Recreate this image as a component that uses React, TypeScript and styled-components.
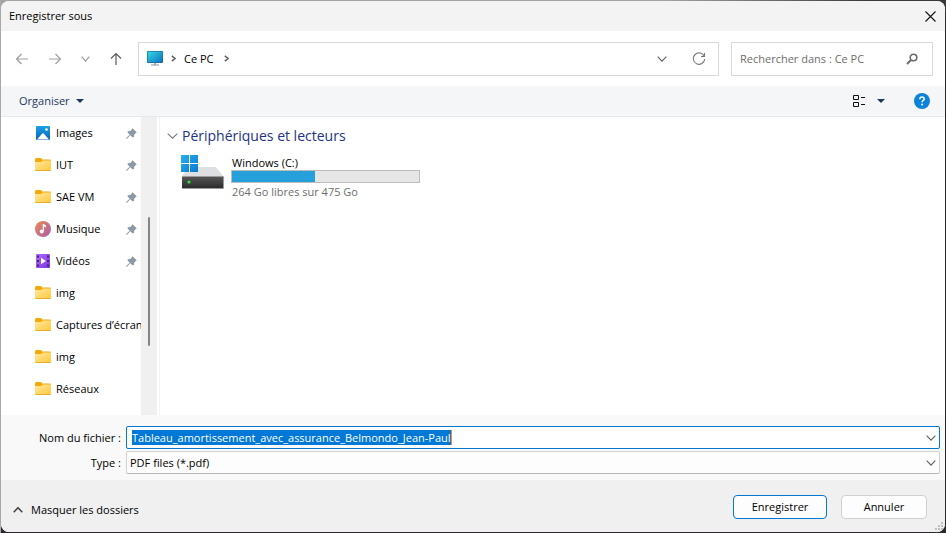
import React, { useEffect, useRef } from "react";
import styled, { createGlobalStyle, css } from "styled-components";

const Global = createGlobalStyle`
  *, *::before, *::after { box-sizing: border-box; }
  body { margin: 0; background: #2b292b; }
  body, button, input, select { font-family: "Open Sans", "Noto Sans", sans-serif; font-size: 11px; line-height: 16px; color: #000; }
  button { padding: 0; border: 0; background: none; }
  svg { display: block; flex: none; }
`;

const Desktop = styled.div`
  min-height: 100vh;
  display: flex;
  padding: 1px;
  background: linear-gradient(to right, #a8a8a8 0 1px, transparent 1px), linear-gradient(to right, #a3a3a3 70%, #3a383a 92%) top / 100% 12px no-repeat, #2b292b;
`;
const Dialog = styled.main`
  flex: 1;
  min-width: 0;
  display: flex;
  flex-direction: column;
  overflow: hidden;
  border-radius: 8px;
  background: #fff;
`;
const TitleBar = styled.header`
  height: 30px;
  flex: none;
  display: flex;
  align-items: center;
  justify-content: space-between;
  padding: 0 9px 0 8px;
  background: #f3f3f3;
`;
const Title = styled.h1`
  margin: 0;
  font-size: 11px;
  font-weight: 400;
`;
const IconButton = styled.button`
  display: flex;
  align-items: center;
  justify-content: center;
  flex: none;
`;
const NavBar = styled.nav`
  height: 55px;
  flex: none;
  display: flex;
  align-items: center;
  padding: 0 12px 0 14px;
`;
const Arrows = styled.div`
  display: flex;
  align-items: center;
  gap: 19px;
  margin-right: 15px;
`;
const field = css`
  height: 34px;
  display: flex;
  align-items: center;
  border: 1px solid #d9d9d9;
  background: #fff;
`;
const AddressBar = styled.div`
  ${field}
  flex: 1;
  min-width: 0;
  padding: 0 12px 0 8px;
  gap: 8px;
`;
const AddressTools = styled.div`
  display: flex;
  align-items: center;
  gap: 25px;
  margin-left: auto;
`;
const Crumb = styled.button`
  padding-right: 2px;
`;
const SearchBox = styled.label`
  ${field}
  width: 202px;
  margin-left: 12px;
  padding: 0 14px 0 8px;
`;
const SearchInput = styled.input`
  flex: 1;
  min-width: 0;
  padding: 0;
  border: 0;
  outline: 0;
  background: none;
  &::placeholder { color: #6d6d6d; opacity: 1; }
`;
const Toolbar = styled.div`
  height: 31px;
  flex: none;
  display: flex;
  align-items: center;
  padding: 0 15px 0 18px;
  background: #f4f6f8;
  border-bottom: 1px solid #e6e8eb;
`;
const MenuButton = styled.button`
  display: flex;
  align-items: center;
  gap: 6px;
  color: #1e395b;
`;
const ViewTools = styled.div`
  display: flex;
  align-items: center;
  gap: 11px;
  margin-left: auto;
  margin-right: 29px;
`;
const Browser = styled.div`
  flex: 1;
  display: flex;
  min-height: 0;
`;
const Sidebar = styled.aside`
  width: 156px;
  flex: none;
  display: flex;
`;
const PlaceList = styled.ul`
  flex: 1;
  min-width: 0;
  margin: 0;
  padding: 0;
  list-style: none;
  overflow: hidden;
`;
const Place = styled.li`
  height: 32px;
  display: flex;
  align-items: center;
  padding-left: 34px;
  gap: 5px;
`;
const PlaceLink = styled.a`
  flex: 1;
  min-width: 0;
  overflow: hidden;
  white-space: nowrap;
  color: #000;
  text-decoration: none;
`;
const PinSlot = styled.span`
  margin-right: 4px;
`;
const ScrollTrack = styled.div`
  width: 16px;
  flex: none;
  display: flex;
  justify-content: center;
  padding-top: 100px;
  background: #f0f0f0;
`;
const ScrollThumb = styled.div`
  width: 2px;
  height: 129px;
  border-radius: 1px;
  background: #858585;
`;
const Content = styled.section`
  flex: 1;
  min-width: 0;
  margin-left: 2px;
  padding: 9px 8px 12px 7px;
  border-left: 1px solid #f3f3f3;
`;
const GroupTitle = styled.h2`
  display: flex;
  align-items: center;
  gap: 4px;
  margin: 0;
  font-size: 14px;
  line-height: 20px;
  font-weight: 400;
  color: #1e3287;
`;
const Drive = styled.div`
  display: flex;
  align-items: flex-start;
  gap: 7px;
  margin-top: 9px;
  padding-left: 14px;
`;
const DriveInfo = styled.div`
  width: 189px;
`;
const DriveName = styled.div`
  line-height: 15px;
  padding-left: 1px;
`;
const Gauge = styled.div`
  height: 13px;
  border: 1px solid #bcbcbc;
  background: #e6e6e6;
`;
const GaugeFill = styled.div`
  height: 100%;
  background: #26a0da;
`;
const FreeSpace = styled.div`
  margin-top: 1px;
  padding-left: 1px;
  color: #6d6d6d;
`;
const Form = styled.div`
  flex: none;
  display: grid;
  grid-template-columns: 120px 1fr;
  column-gap: 5px;
  row-gap: 2px;
  padding: 11px 5px 6px 0;
  background: #f9f9f9;
`;
const FieldLabel = styled.label`
  align-self: center;
  text-align: right;
`;
const NameField = styled.div`
  height: 23px;
  display: flex;
  align-items: center;
  justify-content: space-between;
  padding: 0 3px 0 5px;
  border: 1px solid #0078d4;
  border-radius: 2px;
  background: #fff;
`;
const NameInput = styled.input`
  field-sizing: content;
  min-width: 0;
  height: 15px;
  line-height: 15px;
  padding: 0;
  border: 0;
  border-right: 1px solid #ff8728;
  outline: 0;
  &::selection { background: #0078d7; color: #fff; }
`;
const TypeField = styled.div`
  height: 23px;
  display: grid;
  align-items: center;
  border: 1px solid #d0d0d0;
  border-bottom-color: #b8b8b8;
  border-radius: 2px;
  background: #fdfdfd;
  & > * { grid-area: 1 / 1; }
  & > svg { justify-self: end; margin-right: 3px; pointer-events: none; }
`;
const TypeSelect = styled.select`
  appearance: none;
  width: 100%;
  padding: 0 20px 0 3px;
  border: 0;
  outline: 0;
  background: none;
`;
const Footer = styled.footer`
  height: 52px;
  flex: none;
  display: flex;
  align-items: flex-start;
  gap: 14px;
  padding: 15px 2px 0 12px;
  background: #f0f0f0;
`;
const FoldButton = styled.button`
  display: flex;
  align-items: center;
  gap: 8px;
  margin: 7px auto 0 0;
`;
const DialogButton = styled.button<{ $primary?: boolean }>`
  height: 24px;
  width: ${(p) => (p.$primary ? 94 : 86)}px;
  border: 1px solid ${(p) => (p.$primary ? "#0078d4" : "#d0d0d0")};
  border-radius: 4px;
  background: #fdfdfd;
`;
const Grip = styled.span`
  align-self: flex-end;
  margin-left: -6px;
  padding-bottom: 2px;
`;

type ChevronProps = { w?: number; h?: number; color?: string; dir?: "down" | "up" | "right"; sw?: number };
const Chevron = ({ w = 10, h = 6, color = "#5f5f5f", dir = "down", sw = 1.1 }: ChevronProps) => {
  const d =
    dir === "down" ? `M.7.7 ${w / 2} ${h - 0.8} ${w - 0.7}.7` :
    dir === "up" ? `M.7 ${h - 0.8} ${w / 2} .8 ${w - 0.7} ${h - 0.8}` :
    `M.8.8 ${w - 0.8} ${h / 2} .8 ${h - 0.8}`;
  return <svg width={w} height={h} fill="none" stroke={color} strokeWidth={sw}><path d={d} /></svg>;
};
const ArrowIcon = ({ d, color }: { d: string; color: string }) => (
  <svg width="14" height="14" viewBox="0 0 14 14" fill="none" stroke={color} strokeWidth="1.2"><path d={d} /></svg>
);
const Caret = () => <svg width="8" height="4" fill="#1e395b"><path d="M0 0h8L4 4z" /></svg>;

const MonitorIcon = () => (
  <svg width="16" height="16" viewBox="0 0 16 16">
    <defs><linearGradient id="screen" x2="1" y2="1"><stop stopColor="#36dbe0" /><stop offset="1" stopColor="#0a70c4" /></linearGradient></defs>
    <rect width="16" height="12" rx="1" fill="#176c9c" />
    <rect x=".7" y=".7" width="14.6" height="10.6" fill="url(#screen)" />
    <path d="M7 12h2v2H7z" fill="#aab4bf" /><path d="M4 13.5h8v1H4z" fill="#8996a3" />
  </svg>
);
const FolderIcon = () => (
  <svg width="16" height="16" viewBox="0 0 16 16">
    <defs><linearGradient id="folder" x2="1" y2="1"><stop stopColor="#ffe7a2" /><stop offset="1" stopColor="#ffc938" /></linearGradient></defs>
    <path d="M0 2.5Q0 1 1.3 1H6l1.500 1.500H15q1 0 1 1V8H0z" fill="#f3a90c" />
    <path d="M0 5h6l2-1.500h8V13q0 1-1 1H1q-1 0-1-1z" fill="url(#folder)" />
    <path d="M0 13h16q0 1-1 1H1q-1 0-1-1z" fill="#eab02a" />
  </svg>
);
const ImagesIcon = () => (
  <svg width="16" height="16" viewBox="0 0 16 16">
    <defs><linearGradient id="images" x2="0" y2="1"><stop stopColor="#1fa2e8" /><stop offset="1" stopColor="#0763b8" /></linearGradient></defs>
    <rect x="1" y="1" width="14" height="14" rx="1" fill="url(#images)" />
    <path d="M2 14.5 7.3 8.6q.7-.8 1.4 0L14 14.5z" fill="#fff" /><circle cx="11.5" cy="4.5" r="1.3" fill="#fff" />
  </svg>
);
const MusicIcon = () => (
  <svg width="16" height="16" viewBox="0 0 16 16">
    <defs><linearGradient id="music" x2="1" y2="1"><stop stopColor="#ee8b4c" /><stop offset="1" stopColor="#a95bb0" /></linearGradient></defs>
    <circle cx="8" cy="8" r="8" fill="url(#music)" />
    <circle cx="6.7" cy="10.6" r="2" fill="#fff" /><path d="M7.7 3h1L11 4.5v2L8.9 5.4v5.2H7.7z" fill="#fff" />
  </svg>
);
const VideosIcon = () => (
  <svg width="16" height="16" viewBox="0 0 16 16">
    <defs><linearGradient id="videos" x2="1" y2="1"><stop stopColor="#b16cf5" /><stop offset="1" stopColor="#7a35e0" /></linearGradient></defs>
    <rect x="1" y="1" width="14" height="14" rx="1" fill="url(#videos)" />
    <path d="M2 2.5h2v2H2zM2 7h2v2H2zM2 11.5h2v2H2zM12 2.5h2v2h-2zM12 7h2v2h-2zM12 11.5h2v2h-2z" fill="#43207f" />
    <path d="M6 4.8 11 8l-5 3.2z" fill="#fff" />
  </svg>
);
const PinIcon = () => (
  <svg width="11" height="11" viewBox="0 0 11 11">
    <path d="M6.6.2 10.8 4.4 9.8 5 8.3 6.4 7.8 9 6.8 9.6 4.3 7.2 1 10.8.2 10.8.2 10 3.8 6.7 1.4 4.2 2 3.2 4.6 2.8 6 1.2z" fill="#8c98a4" />
  </svg>
);
const DriveIcon = () => (
  <svg width="43" height="36" viewBox="0 0 43 36">
    <defs>
      <linearGradient id="case" x2="0" y2="1"><stop stopColor="#555" /><stop offset="1" stopColor="#2c2c2c" /></linearGradient>
      <linearGradient id="win" x2="1" y2="1"><stop stopColor="#2ab0ee" /><stop offset="1" stopColor="#0877d2" /></linearGradient>
    </defs>
    <path d="M8 12h27l7 9v2H1v-2z" fill="#dedfe2" />
    <rect x="1" y="21" width="42" height="13" rx="1" fill="#9b9b9b" />
    <rect x="1" y="22" width="41" height="11" fill="url(#case)" />
    <circle cx="8" cy="27" r="1.6" fill="#27e33c" />
    <path d="M0 0h17v17H0z" fill="#fff" />
    <path d="M0 0h8v8H0zM9 0h8v8H9zM0 9h8v8H0zM9 9h8v8H9z" fill="url(#win)" />
  </svg>
);

const places = [
  { name: "Images", icon: <ImagesIcon />, pinned: true },
  { name: "IUT", icon: <FolderIcon />, pinned: true },
  { name: "SAE VM", icon: <FolderIcon />, pinned: true },
  { name: "Musique", icon: <MusicIcon />, pinned: true },
  { name: "Vidéos", icon: <VideosIcon />, pinned: true },
  { name: "img", icon: <FolderIcon /> },
  { name: "Captures d’écran", icon: <FolderIcon /> },
  { name: "img", icon: <FolderIcon /> },
  { name: "Réseaux", icon: <FolderIcon /> },
];

const drive = { total: 475, free: 264 };

export default function App() {
  const nameRef = useRef<HTMLInputElement>(null);
  useEffect(() => {
    nameRef.current?.focus();
    nameRef.current?.select();
  }, []);

  return (
    <Desktop>
      <Global />
      <Dialog>
        <TitleBar>
          <Title>Enregistrer sous</Title>
          <IconButton aria-label="Fermer">
            <svg width="11" height="11" stroke="#111" strokeWidth="1.1"><path d="M.5.5l10 10M10.5.5l-10 10" /></svg>
          </IconButton>
        </TitleBar>
        <NavBar>
          <Arrows>
            <IconButton aria-label="Précédent"><ArrowIcon color="#a0a0a0" d="M13 7H1.5M6.5 2l-5 5 5 5" /></IconButton>
            <IconButton aria-label="Suivant"><ArrowIcon color="#a0a0a0" d="M1 7h11.5M7.5 2l5 5-5 5" /></IconButton>
            <IconButton aria-label="Emplacements récents"><Chevron w={9} color="#999" /></IconButton>
            <IconButton aria-label="Dossier parent"><ArrowIcon color="#5c5c5c" d="M7 13V1.5M2 6.5l5-5 5 5" /></IconButton>
          </Arrows>
          <AddressBar>
            <MonitorIcon />
            <Chevron dir="right" w={5} h={7} sw={1.5} />
            <Crumb>Ce PC</Crumb>
            <Chevron dir="right" w={5} h={7} sw={1.5} />
            <AddressTools>
              <IconButton aria-label="Historique"><Chevron w={10} /></IconButton>
              <IconButton aria-label="Actualiser">
                <svg width="14" height="14" viewBox="0 0 14 14" fill="none" stroke="#777" strokeWidth="1.1"><path d="M12.3 4.5A5.7 5.7 0 1 0 12.7 7M12.5 1v3.5H9" /></svg>
              </IconButton>
            </AddressTools>
          </AddressBar>
          <SearchBox>
            <SearchInput aria-label="Rechercher" placeholder="Rechercher dans : Ce PC" />
            <svg width="12" height="12" fill="none" stroke="#6b6b6b"><circle cx="7.5" cy="4.5" r="3.3" strokeWidth="1.6" /><path d="M5 7 1 11" strokeWidth="2" /></svg>
          </SearchBox>
        </NavBar>
        <Toolbar>
          <MenuButton>Organiser <Caret /></MenuButton>
          <ViewTools>
            <IconButton aria-label="Affichage">
              <svg width="13" height="12" fill="none" stroke="#111"><path d="M.5.5h5v4h-5zM.5 7.5h5v4h-5zM8 2.5h4M8 9.5h4" /></svg>
            </IconButton>
            <IconButton aria-label="Autres options"><Caret /></IconButton>
          </ViewTools>
          <IconButton aria-label="Aide">
            <svg width="16" height="16" viewBox="0 0 16 16"><circle cx="8" cy="8" r="8" fill="#0c83db" /><path d="M5.8 6.2Q5.8 4 8 4t2.2 2q0 1-1.2 1.7-.8.5-.8 1.5" fill="none" stroke="#fff" strokeWidth="1.5" /><circle cx="8.1" cy="11.5" r="1" fill="#fff" /></svg>
          </IconButton>
        </Toolbar>
        <Browser>
          <Sidebar>
            <PlaceList>
              {places.map((p, i) => (
                <Place key={i}>
                  {p.icon}
                  <PlaceLink href="#">{p.name}</PlaceLink>
                  {p.pinned && <PinSlot><PinIcon /></PinSlot>}
                </Place>
              ))}
            </PlaceList>
            <ScrollTrack><ScrollThumb /></ScrollTrack>
          </Sidebar>
          <Content>
            <GroupTitle><Chevron w={11} color="#777" />Périphériques et lecteurs</GroupTitle>
            <Drive>
              <DriveIcon />
              <DriveInfo>
                <DriveName>Windows (C:)</DriveName>
                <Gauge><GaugeFill style={{ width: `${((drive.total - drive.free) / drive.total) * 100}%` }} /></Gauge>
                <FreeSpace>{drive.free} Go libres sur {drive.total} Go</FreeSpace>
              </DriveInfo>
            </Drive>
          </Content>
        </Browser>
        <Form>
          <FieldLabel htmlFor="filename">Nom du fichier :</FieldLabel>
          <NameField>
            <NameInput id="filename" ref={nameRef} defaultValue="Tableau_amortissement_avec_assurance_Belmondo_Jean-Paul" />
            <IconButton aria-label="Noms récents"><Chevron w={10} /></IconButton>
          </NameField>
          <FieldLabel htmlFor="filetype">Type :</FieldLabel>
          <TypeField>
            <TypeSelect id="filetype"><option>PDF files (*.pdf)</option></TypeSelect>
            <Chevron w={10} />
          </TypeField>
        </Form>
        <Footer>
          <FoldButton><Chevron dir="up" w={10} h={6} sw={1.6} color="#444" />Masquer les dossiers</FoldButton>
          <DialogButton $primary>Enregistrer</DialogButton>
          <DialogButton>Annuler</DialogButton>
          <Grip>
            <svg width="8" height="8" fill="#bfbfbf"><path d="M6 0h2v2H6zM3 3h2v2H3zM6 3h2v2H6zM0 6h2v2H0zM3 6h2v2H3zM6 6h2v2H6z" /></svg>
          </Grip>
        </Footer>
      </Dialog>
    </Desktop>
  );
}
